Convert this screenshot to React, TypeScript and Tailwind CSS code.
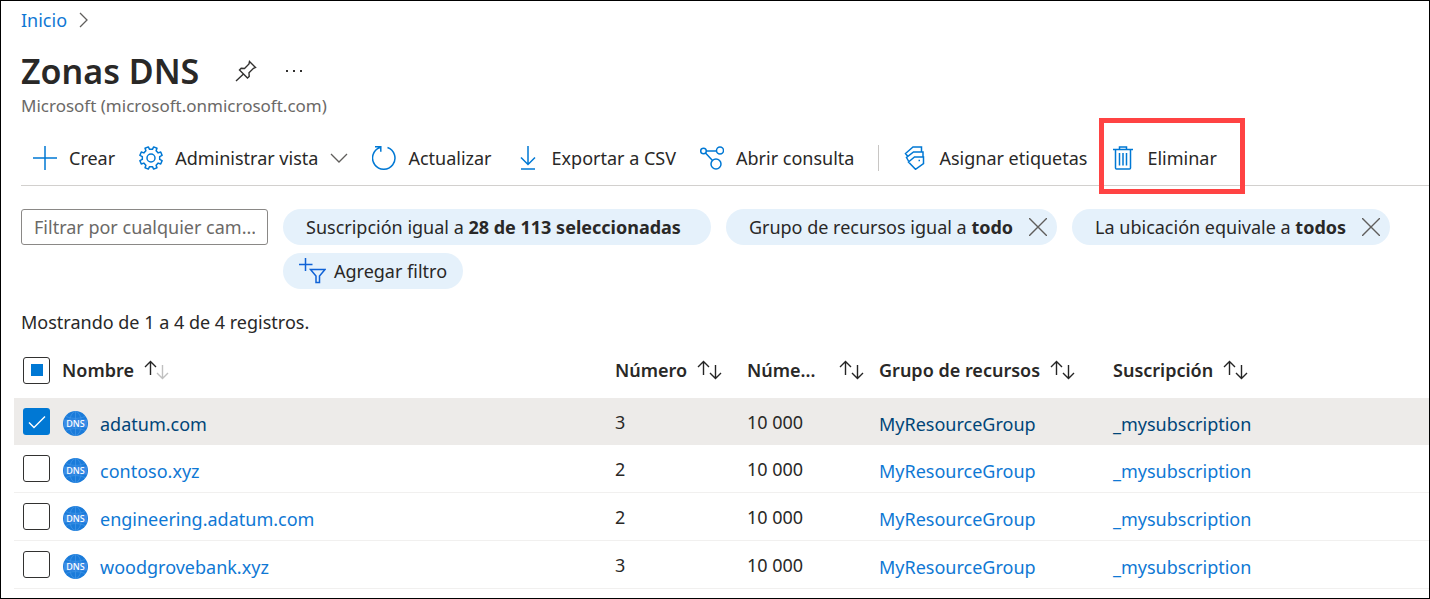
import { useState } from "react"
import type { ReactNode } from "react"

const zones = [
  { name: "adatum.com", records: "3", max: "10 000", group: "MyResourceGroup", subscription: "_mysubscription" },
  { name: "contoso.xyz", records: "2", max: "10 000", group: "MyResourceGroup", subscription: "_mysubscription" },
  { name: "engineering.adatum.com", records: "2", max: "10 000", group: "MyResourceGroup", subscription: "_mysubscription" },
  { name: "woodgrovebank.xyz", records: "3", max: "10 000", group: "MyResourceGroup", subscription: "_mysubscription" },
]

const columns = ["Número", "Núme...", "Grupo de recursos", "Suscripción"]

// Eight rounded teeth around the hub
const gearPath = (() => {
  const points: string[] = []
  for (let i = 0; i < 8; i++) {
    const base = i * 45 + 22.5
    const corners = [[-13, 8.8], [-9, 11.4], [9, 11.4], [13, 8.8]]
    corners.forEach(([offset, radius]) => {
      const a = ((base + offset) * Math.PI) / 180
      points.push(`${(12 + radius * Math.cos(a)).toFixed(2)} ${(12 + radius * Math.sin(a)).toFixed(2)}`)
    })
  }
  return `M${points.join("L")}Z`
})()

function Icon({ children }: { children: ReactNode }) {
  return (
    <svg viewBox="0 0 24 24" className="size-6 shrink-0 fill-none stroke-[#0078d4] stroke-[1.5]" aria-hidden="true">
      {children}
    </svg>
  )
}

function ToolbarButton({ icon, label, children }: { icon: ReactNode; label: string; children?: ReactNode }) {
  return (
    <button type="button" className="relative flex items-center gap-3 whitespace-nowrap">
      <Icon>{icon}</Icon>
      {label}
      {children}
    </button>
  )
}

function SortArrows({ ascending = false }: { ascending?: boolean }) {
  return (
    <svg viewBox="0 0 25 20" className="h-5 w-[25px] shrink-0 fill-none stroke-[#242424] stroke-[1.4]" aria-hidden="true">
      <path d="M6.500 15V1.500M1 7l5.500-5.500L12 7" />
      <path d="M18.500 5v13.500M13 13l5.500 5.500L24 13" className={ascending ? "stroke-[#c0c0c0]" : ""} />
    </svg>
  )
}

function Checkbox({ label, checked, mixed = false, onChange }: { label: string; checked: boolean; mixed?: boolean; onChange: () => void }) {
  return (
    <span className="ml-[9px] grid size-[27px] place-items-center">
      <input
        type="checkbox"
        aria-label={label}
        checked={checked}
        onChange={onChange}
        className={
          checked && !mixed
            ? "col-start-1 row-start-1 size-[27px] appearance-none rounded-[3px] bg-[#0078d4]"
            : "col-start-1 row-start-1 size-[27px] appearance-none rounded-[3px] border border-[#323130] bg-white"
        }
      />
      {mixed && <span className="pointer-events-none col-start-1 row-start-1 size-3 bg-[#0078d4]" />}
      {checked && !mixed && (
        <svg viewBox="0 0 18 14" className="pointer-events-none col-start-1 row-start-1 h-[14px] w-[18px] fill-none stroke-white stroke-[1.4]" aria-hidden="true">
          <path d="M1 7.500l5 5L17 1.500" />
        </svg>
      )}
    </span>
  )
}

function DnsIcon() {
  return (
    <span className="grid size-[25px] shrink-0 place-items-center" aria-hidden="true">
      <svg viewBox="0 0 25 25" className="col-start-1 row-start-1 size-[25px] fill-none stroke-[#3f93e4] stroke-[.8]">
        <circle cx="12.500" cy="12.500" r="12.500" className="fill-[#1a7bda] stroke-none" />
        <ellipse cx="12.500" cy="12.500" rx="6" ry="12" />
        <path d="M3 5.500c6 2.500 13 2.500 19 0M3 19.500c6-2.500 13-2.500 19 0M12.500 0v25" />
        <path d="M1 8.500h23v8H1z" className="fill-[#3a8ce6] stroke-none" />
      </svg>
      <span className="col-start-1 row-start-1 text-[9px] leading-none font-medium text-white">DNS</span>
    </span>
  )
}

function FilterPill({ text, value, removable = false }: { text: string; value: string; removable?: boolean }) {
  return (
    <div className={removable ? "flex h-9 items-center gap-4 rounded-full bg-[#e5f1fb] pr-[10px] pb-px pl-[23px]" : "flex h-9 items-center rounded-full bg-[#e5f1fb] pr-[30px] pb-px pl-[23px]"}>
      <button type="button" className="whitespace-nowrap">
        {text} <b className="font-bold">{value}</b>
      </button>
      {removable && (
        <button type="button" aria-label="Quitar filtro">
          <svg viewBox="0 0 18 18" className="size-[18px] fill-none stroke-[#605e5c] stroke-[1.4]">
            <path d="M0 0l18 18M18 0L0 18" />
          </svg>
        </button>
      )}
    </div>
  )
}

export default function App() {
  const [selected, setSelected] = useState<string[]>(["adatum.com"])

  const toggle = (name: string) =>
    setSelected((prev) => (prev.includes(name) ? prev.filter((n) => n !== name) : [...prev, name]))

  const allSelected = selected.length === zones.length
  const toggleAll = () => setSelected(allSelected ? [] : zones.map((z) => z.name))

  return (
    <main className="min-h-screen overflow-hidden border border-black bg-white font-['Noto_Sans','Open_Sans',sans-serif] text-[18px] leading-6 text-[#292827]">
      <header className="pl-5">
        <nav className="flex items-center gap-3 pt-[7px]" aria-label="Ruta">
          <a href="#" className="text-[#0f78d4]">Inicio</a>
          <svg viewBox="0 0 9 16" className="h-4 w-[9px] fill-none stroke-[#605e5c] stroke-[1.3]" aria-hidden="true">
            <path d="M1 1l7 7-7 7" />
          </svg>
        </nav>
        <div className="flex h-[62px] items-center pt-[15px]">
          <h1 className="text-[34px] leading-10 font-semibold">Zonas DNS</h1>
          <button type="button" aria-label="Anclar" className="ml-9">
            <svg viewBox="0 0 22 22" className="size-[22px] fill-none stroke-[#323130] stroke-[1.4]">
              <path d="M14.500 1.500l6 6-2 .8-4.500 4.500.2 3.700-1.700 1.500L4.500 10l1.700-1.700 3.300.2L14 4zM8.500 14L1 21" />
            </svg>
          </button>
          <button type="button" aria-label="Más opciones" className="ml-7">
            <svg viewBox="0 0 18 4" className="h-1 w-[18px] fill-[#323130]">
              <path d="M1 1h2v2H1zM8 1h2v2H8zM15 1h2v2h-2z" />
            </svg>
          </button>
        </div>
        <p className="text-[17px] text-[#6b6967]">Microsoft (microsoft.onmicrosoft.com)</p>

        <div className="mt-3 flex h-[56px] items-center gap-6 border-b border-[#d2d0ce] pl-3" role="toolbar">
          <ToolbarButton label="Crear" icon={<path d="M12 0v24M0 12h24" />} />
          <ToolbarButton label="Administrar vista" icon={<><path d={gearPath} strokeLinejoin="round" /><circle cx="12" cy="12" r="4" /></>}>
            <svg viewBox="0 0 18 10" className="h-[10px] w-[18px] fill-none stroke-[#605e5c] stroke-[1.3]" aria-hidden="true">
              <path d="M1 1l8 8 8-8" />
            </svg>
          </ToolbarButton>
          <ToolbarButton label="Actualizar" icon={<path d="M15.500 1.500A11.200 11.200 0 1 1 8 1.500M3 .8h5.800v5" />} />
          <ToolbarButton label="Exportar a CSV" icon={<path d="M12 0v18M5 11.500l7 7 7-7M5 23h14" />} />
          <ToolbarButton
            label="Abrir consulta"
            icon={<><circle cx="3.500" cy="5" r="2.800" /><circle cx="20" cy="4.500" r="3.500" /><circle cx="16" cy="18" r="5" /><path d="M6.500 5h10M5.500 7l7 7.500" /></>}
          />
          <span className="h-[26px] w-px bg-[#c8c6c4]" />
          <ToolbarButton
            label="Asignar etiquetas"
            icon={<path d="M5.500 16l6-5H20.500v6.500l-8 5.800zM5.500 15l-2-3.500 7-5.500h9.500v5M4.500 10L2.500 7.500 10 1h8.500v5M15.500 14.500h1.500" />}
          />
          <ToolbarButton
            label="Eliminar"
            icon={<><path d="M2 3.500h20M8.500 3.500V1h7v2.500M4.500 3.500V22a1 1 0 0 0 1 1h13a1 1 0 0 0 1-1V3.500" /><path d="M8.500 7v12.500M12 7v12.500M15.500 7v12.500" /></>}
          >
            <span className="pointer-events-none absolute -top-7 -right-7 -bottom-6 -left-3 border-[5px] border-[#ff4343]" />
          </ToolbarButton>
        </div>
      </header>

      <section className="flex flex-wrap items-start gap-[15px] pt-[23px] pl-5">
        <input
          type="text"
          aria-label="Filtrar"
          placeholder="Filtrar por cualquier cam..."
          className="h-9 w-[247px] rounded-[3px] border border-[#8a8886] px-3 pb-px placeholder:text-[#6b6967]"
        />
        <div className="flex flex-1 flex-wrap gap-x-[15px] gap-y-2">
          <FilterPill text="Suscripción igual a" value="28 de 113 seleccionadas" />
          <FilterPill text="Grupo de recursos igual a" value="todo" removable />
          <FilterPill text="La ubicación equivale a" value="todos" removable />
          <div className="basis-full">
            <button type="button" className="flex h-9 items-center gap-2 rounded-full bg-[#e5f1fb] pr-4 pl-4">
              <svg viewBox="0 0 27 26" className="h-[26px] w-[27px] fill-none stroke-[#0f62d6] stroke-[1.5]" aria-hidden="true">
                <path d="M6.500 0v13M0 6.500h13.500M11.500 11.500h14.500l-5.500 6.500v6.500h-3.500V18z" />
              </svg>
              Agregar filtro
            </button>
          </div>
        </div>
      </section>

      <p className="pt-[21px] pl-5">Mostrando de 1 a 4 de 4 registros.</p>

      <div className="pt-2 pl-[13px]">
        <table className="w-full table-fixed border-separate border-spacing-0 text-left">
          <colgroup>
            <col className="w-12" />
            <col className="w-[553px]" />
            <col className="w-[132px]" />
            <col className="w-[132px]" />
            <col className="w-[234px]" />
            <col />
          </colgroup>
          <thead>
            <tr>
              <th className="h-14 p-0">
                <Checkbox label="Seleccionar todo" checked={allSelected} mixed={selected.length > 0 && !allSelected} onChange={toggleAll} />
              </th>
              <th className="p-0 font-semibold">
                <button type="button" className="flex items-center gap-[10px]">Nombre <SortArrows ascending /></button>
              </th>
              {columns.map((column) => (
                <th key={column} className="p-0 font-semibold">
                  <button type="button" className={column === "Núme..." ? "flex w-[117px] items-center justify-between whitespace-nowrap" : "flex items-center gap-[10px] whitespace-nowrap"}>
                    {column} <SortArrows />
                  </button>
                </th>
              ))}
            </tr>
          </thead>
          <tbody>
            {zones.map((zone) => {
              const active = selected.includes(zone.name)
              return (
                <tr
                  key={zone.name}
                  className={
                    active
                      ? "bg-[#edebe9] *:h-[47px] *:p-0 [&_a]:text-[#004578]"
                      : "*:h-12 *:border-b *:border-[#f1f0ef] *:p-0 [&_a]:text-[#0f78d4]"
                  }
                >
                  <td><Checkbox label={zone.name} checked={active} onChange={() => toggle(zone.name)} /></td>
                  <td>
                    <span className="flex items-center gap-3 pt-1 pl-px">
                      <DnsIcon />
                      <a href="#">{zone.name}</a>
                    </span>
                  </td>
                  <td>{zone.records}</td>
                  <td>{zone.max}</td>
                  <td><a href="#" className="block pt-1">{zone.group}</a></td>
                  <td><a href="#" className="block pt-1">{zone.subscription}</a></td>
                </tr>
              )
            })}
          </tbody>
        </table>
      </div>
    </main>
  )
}
